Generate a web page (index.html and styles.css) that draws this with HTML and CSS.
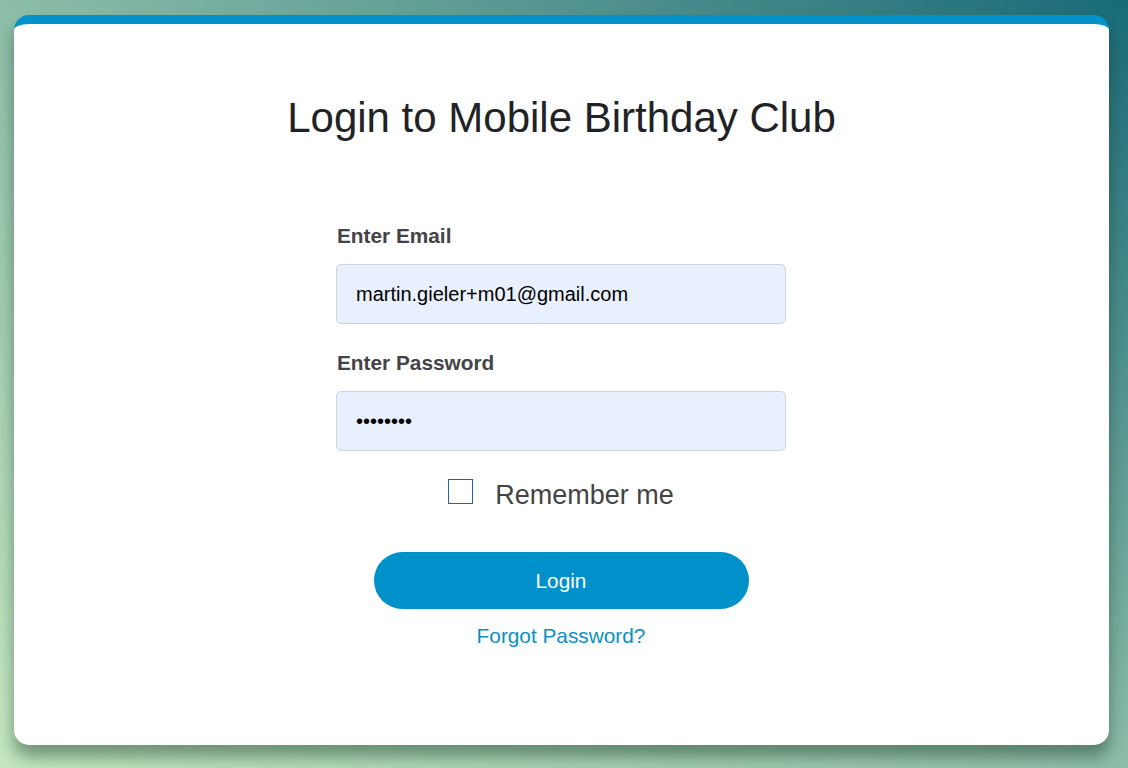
FILE: index.html
```html
<!DOCTYPE html>
<html lang="en">
<head>
<meta charset="utf-8">
<title>Login to Mobile Birthday Club</title>
<link rel="stylesheet" href="styles.css">
</head>
<body>
<div class="page">
  <main class="card">
    <h1 class="title">Login to Mobile Birthday Club</h1>
    <form class="form">
      <label class="label" for="email">Enter Email</label>
      <input class="input" id="email" type="email" value="martin.gieler+m01@gmail.com">
      <label class="label label-second" for="password">Enter Password</label>
      <input class="input" id="password" type="password" value="password">
      <div class="remember">
        <span class="checkbox"></span>
        <span class="remember-text">Remember me</span>
      </div>
      <button class="button" type="button">Login</button>
      <a class="forgot" href="#">Forgot Password?</a>
    </form>
  </main>
</div>
</body>
</html>
```

FILE: styles.css
```css
html, body {
  margin: 0;
  padding: 0;
  height: 100%;
}

body {
  font-family: "Liberation Sans", Arial, sans-serif;
  background: linear-gradient(to top right, #c4e7c0 0%, #8dbda8 50%, #186a78 100%);
  overflow: hidden;
}

.page {
  padding: 15px 19px 0 14px;
}

.card {
  box-sizing: border-box;
  height: 730px;
  background: #ffffff;
  border-top: 9px solid #0092c9;
  border-radius: 15px;
  box-shadow: 0 12px 16px rgba(20, 50, 30, 0.45);
  padding-top: 70px;
  display: flex;
  flex-direction: column;
  align-items: center;
}

.title {
  margin: 0;
  font-size: 42px;
  line-height: 48px;
  font-weight: 400;
  color: #1f2226;
}

.form {
  width: 450px;
  margin-top: 82px;
  margin-right: 1px;
  display: flex;
  flex-direction: column;
  align-items: center;
}

.label {
  align-self: stretch;
  padding-left: 1px;
  font-size: 20.8px;
  line-height: 24px;
  font-weight: 700;
  color: #444347;
  margin-bottom: 16px;
}

.label-second {
  margin-top: 27px;
}

.input {
  box-sizing: border-box;
  width: 450px;
  height: 60px;
  margin: 0;
  padding: 0 19px;
  border: 1px solid #cfd4dc;
  border-radius: 5px;
  background: #e8f0fe;
  font-family: "Liberation Sans", Arial, sans-serif;
  font-size: 20px;
  color: #000000;
  outline: none;
}

.remember {
  margin-top: 28px;
  display: flex;
  align-items: flex-start;
  gap: 22px;
}

.checkbox {
  box-sizing: border-box;
  width: 25px;
  height: 25px;
  border: 1px solid #1d62b5;
  background: #ffffff;
}

.remember-text {
  font-size: 27px;
  line-height: 31px;
  margin-top: 1px;
  color: #434343;
}

.button {
  margin-top: 41px;
  width: 375px;
  height: 57px;
  border: none;
  border-radius: 29px;
  background: #0091cb;
  color: #ffffff;
  font-family: "Liberation Sans", Arial, sans-serif;
  font-size: 20.8px;
  cursor: pointer;
}

.forgot {
  margin-top: 15px;
  font-size: 20.8px;
  line-height: 24px;
  color: #0a90c6;
  text-decoration: none;
}
```
